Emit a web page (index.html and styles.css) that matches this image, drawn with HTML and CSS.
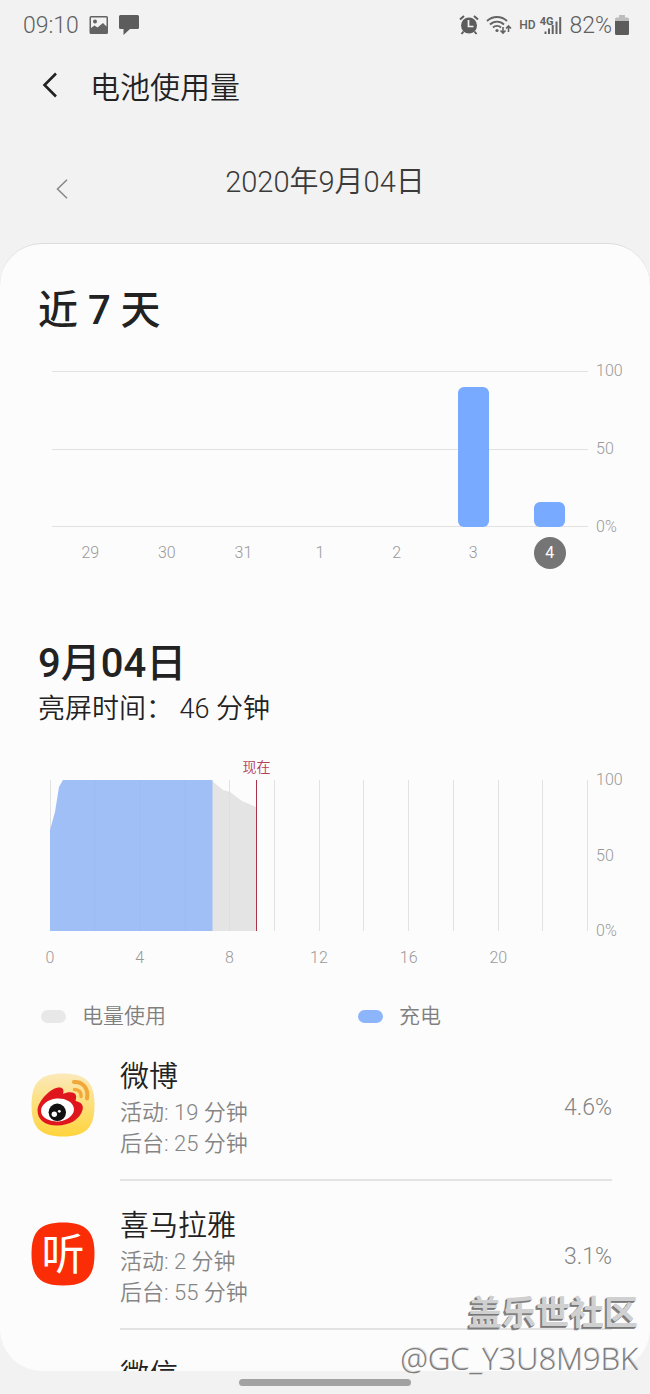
FILE: index.html
```html
<!DOCTYPE html>
<html lang="zh-CN">
<head>
    <meta charset="UTF-8" />
    <meta name="viewport" content="width=device-width, initial-scale=1.0" />
    <title>电池使用量</title>
    <link rel="stylesheet" href="styles.css">
</head>
<body>

<div class="screen">

    <!-- Status bar -->
    <div class="status-bar">
        <div class="status-left">
            <span>09:10</span>
            <svg width="20" height="18" viewBox="0 0 20 18">
                <path fill="#636363" fill-rule="evenodd" d="M2 0h15.500a1.500 1.500 0 0 1 1.500 1.500v15a1.500 1.500 0 0 1-1.500 1.500H2a1.500 1.500 0 0 1-1.500-1.500v-15A1.500 1.500 0 0 1 2 0zM2 1.500v10.500l3.500-2.500 3 2 5.500-4.500 3.500 3.500V1.500z" />
                <circle cx="6" cy="5.500" r="2" fill="#636363" />
            </svg>
            <svg width="20" height="20" viewBox="0 0 20 20">
                <path fill="#5c5c5c" d="M1.500 0h17A1.500 1.500 0 0 1 20 1.500v11a1.500 1.500 0 0 1-1.500 1.500H11l-6.500 6v-6h-3A1.500 1.500 0 0 1 0 12.500v-11A1.500 1.500 0 0 1 1.500 0z" />
            </svg>
        </div>
        <div class="status-right">
            <svg width="20" height="20" viewBox="0 0 20 20">
                <circle cx="10" cy="10.500" r="8" fill="#5c5c5c" />
                <path d="M1 4.500l4-3.500M19 4.500l-4-3.500M4.500 16.500l-2 2.500M15.500 16.500l2 2.500" stroke="#5c5c5c" stroke-width="2" fill="none" />
                <path d="M9.500 5v6.500h5" stroke="#f2f2f2" stroke-width="1.700" fill="none" />
            </svg>
            <svg class="wifi" width="26" height="20" viewBox="0 0 26 20">
                <g fill="none" stroke="#636363" stroke-width="1.900">
                    <path d="M1 6a14.500 14.500 0 0 1 20 0" />
                    <path d="M4 9.500a10 10 0 0 1 14 0" />
                    <path d="M7 12.500a5.800 5.800 0 0 1 8 0" />
                    <path d="M17 12v6M14.500 15.500l2.500 2.500 2.500-2.500M22.500 17v-6M20 13.500l2.500-2.500 2.500 2.500" stroke-width="1.600" />
                </g>
                <circle cx="11" cy="15.500" r="1.600" fill="#636363" />
            </svg>
            <span class="hd">HD</span>
            <span class="signal">
                <span class="net">4G</span>
                <svg width="18" height="18" viewBox="0 0 18 18">
                    <path d="M1.500 15.500V18M5 12.500V18M8.700 9V18M12.500 5.500V18M16.200 1V18" stroke="#636363" stroke-width="2" />
                </svg>
            </span>
            <span class="level">82%</span>
            <svg width="14" height="20" viewBox="0 0 14 20">
                <path fill="#bdbdbd" d="M4 0h6v2.500h2.500A1.500 1.500 0 0 1 14 4v3H0V4a1.500 1.500 0 0 1 1.500-1.500H4z" />
                <path fill="#5c5c5c" d="M0 6h14v12.500a1.500 1.500 0 0 1-1.500 1.500h-11A1.500 1.500 0 0 1 0 18.500z" />
            </svg>
        </div>
    </div>

    <!-- Title -->
    <header class="header">
        <button class="icon-btn" type="button" aria-label="返回">
            <svg width="16" height="26" viewBox="0 0 16 26">
                <path d="M14 1.500L2.500 13 14 24.500" fill="none" stroke="#222" stroke-width="2.600" />
            </svg>
        </button>
        <h1>电池使用量</h1>
    </header>

    <div class="date-bar">
        <button class="icon-btn prev" type="button" aria-label="前一天">
            <svg width="12" height="20" viewBox="0 0 12 20">
                <path d="M11 .8L1.500 10 11 19.200" fill="none" stroke="#8a8a8a" stroke-width="1.600" />
            </svg>
        </button>
        <span class="date">2020年9月04日</span>
    </div>

    <main class="card">

        <!-- Last 7 days -->
        <section class="week">
            <h2>近 7 天</h2>
            <div class="chart">
                <div class="plot">
                    <div class="h-lines"><i></i><i></i><i></i></div>
                    <div class="bars">
                        <span style="height:0%"></span>
                        <span style="height:0%"></span>
                        <span style="height:0%"></span>
                        <span style="height:0%"></span>
                        <span style="height:0%"></span>
                        <span style="height:90%"></span>
                        <span style="height:16%"></span>
                    </div>
                </div>
                <div class="scale"><span>100</span><span>50</span><span>0%</span></div>
                <div class="days">
                    <span>29</span>
                    <span>30</span>
                    <span>31</span>
                    <span>1</span>
                    <span>2</span>
                    <span>3</span>
                    <span class="selected">4</span>
                </div>
            </div>
        </section>

        <!-- Selected day -->
        <section class="day">
            <h2>9月04日</h2>
            <p class="screen-time">亮屏时间： 46 分钟</p>
            <div class="chart">
                <div class="plot">
                    <div class="v-lines"><i></i><i></i><i></i><i></i><i></i><i></i><i></i><i></i><i></i><i></i><i></i><i></i><i></i></div>
                    <svg class="area" viewBox="0 0 538 151" preserveAspectRatio="none">
                        <path class="area-use" d="M162 1l11 9 7 2 12 9 14 6v124h-44z" />
                        <path class="area-charge" d="M0 50l5-18 4-25 4-7h149.500v151H0z" />
                        <path class="area-line" d="M45 0v151M90 0v151M135 0v151M179.500 12v139" />
                    </svg>
                    <div class="now"><span>现在</span></div>
                </div>
                <div class="scale"><span>100</span><span>50</span><span>0%</span></div>
                <div class="hours">
                    <span>0</span>
                    <span>4</span>
                    <span>8</span>
                    <span>12</span>
                    <span>16</span>
                    <span>20</span>
                </div>
            </div>
            <ul class="legend">
                <li><i class="swatch use"></i>电量使用</li>
                <li><i class="swatch charge"></i>充电</li>
            </ul>
        </section>

        <!-- Usage by app -->
        <ul class="apps">
            <li>
                <svg class="app-icon" viewBox="0 0 64 64">
                    <defs>
                        <linearGradient id="weibo-bg" x1="0" y1="0" x2="0" y2="1">
                            <stop offset="0" stop-color="#fbe9ba" />
                            <stop offset="1" stop-color="#ffd43c" />
                        </linearGradient>
                    </defs>
                    <path fill="url(#weibo-bg)" d="M32 0.500C55 .5 63.500 9 63.500 32S55 63.500 32 63.500 .5 55 .5 32 9 .5 32 .5z" />
                    <path fill="#e0161e" d="M6.500 37C7 29 18 16 27 14.500c4.500-.7 6.500 2 5 6.500 5-2.500 12-2.500 13 1.500.5 2.500-.3 4-.5 5.500 5.500 1 8.500 4 7 9C49 46 39 52.500 26 52.500 14 52.500 6.500 47 6.500 37z" />
                    <ellipse cx="26.500" cy="37" rx="16.500" ry="11.500" fill="#fff" transform="rotate(-5 26.500 37)" />
                    <circle cx="26.300" cy="39.300" r="8.700" fill="#111" />
                    <circle cx="23.300" cy="41.300" r="2.700" fill="#fff" />
                    <circle cx="28.300" cy="38.300" r="1.400" fill="#fff" />
                    <g fill="none" stroke="#f2a838" stroke-width="4" stroke-linecap="round">
                        <path d="M43 9C52 8.500 58 16 56 25.500" />
                        <path d="M43.500 16.500c4.500 0 7 3 6.500 7" stroke-width="3.500" />
                    </g>
                </svg>
                <div class="app-info">
                    <h3>微博</h3>
                    <p>活动: 19 分钟</p>
                    <p>后台: 25 分钟</p>
                </div>
                <span class="percent">4.6%</span>
            </li>
            <li>
                <svg class="app-icon" viewBox="0 0 64 64">
                    <path fill="#fb2d06" d="M32 0.500C55 .5 63.500 9 63.500 32S55 63.500 32 63.500 .5 55 .5 32 9 .5 32 .5z" />
                    <text class="logo-text" x="32" y="48" text-anchor="middle">听</text>
                </svg>
                <div class="app-info">
                    <h3>喜马拉雅</h3>
                    <p>活动: 2 分钟</p>
                    <p>后台: 55 分钟</p>
                </div>
                <span class="percent">3.1%</span>
            </li>
            <li>
                <span class="app-icon"></span>
                <div class="app-info">
                    <h3>微信</h3>
                </div>
            </li>
        </ul>
    </main>

    <div class="nav-bar"><span class="handle"></span></div>

    <div class="watermark">
        <strong>盖乐世社区</strong>
        <span>@GC_Y3U8M9BK</span>
    </div>
</div>

</body>
</html>
```
FILE: styles.css
```css
* {
    box-sizing: border-box;
}
body {
    margin: 0;
    background: #f2f2f2;
    color: #222;
    font-family: Roboto, "Noto Sans CJK SC", sans-serif;
    font-weight: 350;
}
h1, h2, h3, p, ul {
    margin: 0;
    padding: 0;
}
ul {
    list-style: none;
}
.screen {
    position: relative;
    display: flex;
    flex-direction: column;
    height: 100vh;
    overflow: hidden;
}

/* Status bar */
.status-bar {
    flex: none;
    display: flex;
    justify-content: space-between;
    align-items: center;
    height: 50px;
    padding: 0 21px 0 23px;
    color: #606060;
    font-size: 23px;
}
.status-left,
.status-right {
    display: flex;
    align-items: center;
    gap: 10px;
}
.status-right {
    gap: 7px;
}
.hd {
    margin-right: -3px;
    font-size: 12px;
    font-weight: 500;
}
.signal {
    display: flex;
    align-items: flex-end;
}
.net {
    align-self: flex-start;
    margin-right: -9px;
    font-size: 11px;
    line-height: 11px;
    font-weight: 700;
}
.level {
    margin-right: -4px;
}

/* Title and date */
.header {
    flex: none;
    display: flex;
    align-items: center;
    gap: 32px;
    height: 70px;
    padding-left: 42px;
}
.header h1 {
    font-size: 30px;
    font-weight: 350;
}
.icon-btn {
    display: flex;
    padding: 0;
    border: none;
    background: none;
    cursor: pointer;
}
.date-bar {
    flex: none;
    display: grid;
    grid-template-columns: 1fr auto 1fr;
    align-items: center;
    height: 123px;
    padding-bottom: 5px;
}
.prev {
    justify-self: start;
    padding: 20px 0 0 56px;
}
.date {
    color: #3a3a3a;
    font-size: 29px;
}

/* Card */
.card {
    flex: 1;
    min-height: 0;
    overflow: hidden;
    padding-top: 43px;
    background: #fcfcfc;
    border-top: 1px solid #dcdcdc;
    border-radius: 42px;
}
.week,
.day {
    padding: 0 38px;
}
h2 {
    font-size: 40px;
    line-height: 48px;
    font-weight: 500;
}

/* Charts */
.chart {
    display: grid;
    grid-template-columns: 1fr 28px;
    column-gap: 8px;
    margin-right: -12px;
    color: #999;
    font-size: 16px;
    line-height: 20px;
}
.plot {
    display: grid;
}
.plot > * {
    grid-area: 1 / 1;
}
.scale {
    display: flex;
    flex-direction: column;
    justify-content: space-between;
    margin: -10px 0;
}
.week .chart {
    margin-top: 36px;
    margin-left: 14px;
}
.week .plot {
    height: 156px;
}
.h-lines {
    display: flex;
    flex-direction: column;
    justify-content: space-between;
}
.h-lines i {
    height: 1px;
    background: #e2e2e2;
}
.bars,
.days {
    display: grid;
    grid-template-columns: repeat(7, 1fr);
    justify-items: center;
}
.bars {
    align-items: end;
}
.bars span {
    width: 31px;
    background: #78aaff;
    border-radius: 6px;
}
.days {
    margin-top: 10px;
}
.days span {
    width: 32px;
    line-height: 32px;
    text-align: center;
}
.days .selected {
    background: #757575;
    border-radius: 50%;
    color: #fff;
    font-weight: 400;
}

/* Selected day */
.day {
    padding-top: 71px;
}
.screen-time {
    margin-top: 3px;
    font-size: 27px;
    line-height: 36px;
}
.day .chart {
    margin-top: 53px;
    margin-left: 12px;
}
.day .plot {
    position: relative;
    height: 151px;
}
.v-lines {
    display: flex;
    justify-content: space-between;
}
.v-lines i {
    width: 1px;
    background: #e2e2e2;
}
.area {
    width: 100%;
    height: 151px;
}
.area-use {
    fill: #e4e4e4;
}
.area-charge {
    fill: #9fbff6;
}
.area-line {
    stroke: #888;
    stroke-opacity: 0.06;
}
.now {
    position: absolute;
    left: 38.4%;
    top: -23px;
    bottom: 0;
    display: flex;
    flex-direction: column;
    align-items: center;
    transform: translateX(-50%);
    color: #b5405a;
    font-size: 14px;
}
.now::after {
    content: "";
    flex: 1;
    width: 1px;
    margin-top: 3px;
    background: #a8324a;
}
.hours {
    display: grid;
    grid-template-columns: repeat(6, 1fr);
    justify-items: start;
    margin-top: 17px;
}
.hours span {
    transform: translateX(-50%);
}
.legend {
    display: grid;
    grid-template-columns: 317px 1fr;
    margin-top: 33px;
    padding-left: 3px;
    color: #808080;
    font-size: 21px;
    line-height: 30px;
}
.legend li {
    display: flex;
    align-items: center;
    gap: 16px;
}
.swatch {
    width: 25px;
    height: 13px;
    border-radius: 7px;
}
.use {
    background: #e8e8e8;
}
.charge {
    background: #8db5fb;
}

/* Usage by app */
.apps {
    padding-top: 1px;
}
.apps li {
    display: flex;
    gap: 25px;
    padding: 0 38px 0 31px;
}
.app-icon {
    flex: none;
    width: 64px;
    height: 64px;
    margin-top: 41px;
}
.logo-text {
    fill: #fff;
    font-size: 43px;
    font-weight: 400;
}
.app-info {
    flex: 1;
    padding: 27px 0 20px;
    border-bottom: 2px solid #e3e3e3;
}
.app-info h3 {
    margin-bottom: 2px;
    font-size: 29px;
    line-height: 36px;
    font-weight: 350;
}
.app-info p {
    color: #858585;
    font-size: 22px;
    line-height: 31px;
}
.percent {
    display: flex;
    align-items: center;
    margin-left: -25px;
    padding-top: 3px;
    border-bottom: 2px solid #e3e3e3;
    color: #858585;
    font-size: 23px;
}

/* Bottom */
.nav-bar {
    flex: none;
    display: flex;
    justify-content: center;
    height: 23px;
    padding-top: 8px;
}
.handle {
    width: 172px;
    height: 7px;
    background: #a2a2a2;
    border-radius: 4px;
}
.watermark {
    position: absolute;
    right: 12px;
    bottom: 14px;
    display: flex;
    flex-direction: column;
    align-items: flex-end;
    color: #d0d0d0;
    text-shadow: -1px 1px 0 #777, -2px 2px 0 #888;
}
.watermark strong {
    font-size: 34px;
    line-height: 46px;
}
.watermark span {
    color: #7c7c7c;
    font-family: "Open Sans", sans-serif;
    font-size: 31px;
    line-height: 44px;
    font-weight: 300;
    text-shadow: 1px -1px 0 #ddd;
}
```
